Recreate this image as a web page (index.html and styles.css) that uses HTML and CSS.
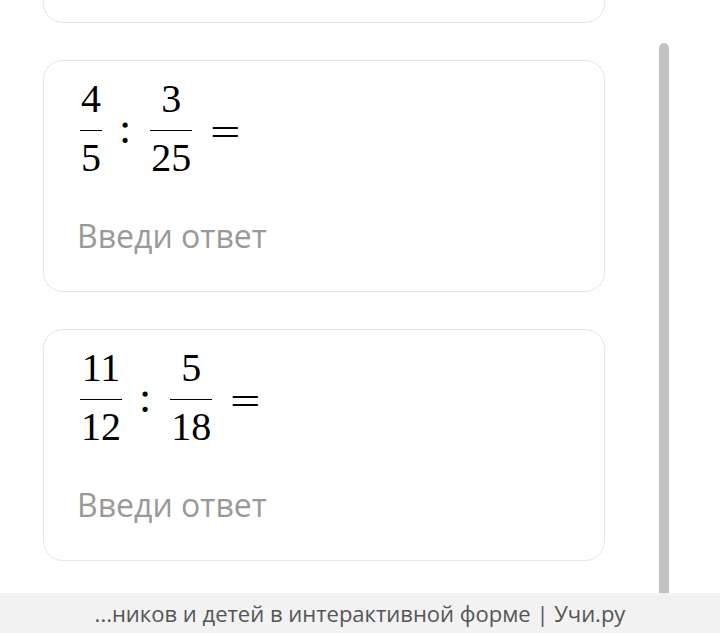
FILE: index.html
```html
<!DOCTYPE html>
<html lang="ru">
<head>
    <meta charset="UTF-8">
    <meta name="viewport" content="width=device-width, initial-scale=1.0">
    <title>Учи.ру</title>
    <link rel="stylesheet" href="styles.css">
</head>
<body>
    <div class="tasks">
        <!-- previous task, scrolled out of view -->
        <div class="task"></div>

        <div class="task">
            <div class="expr">
                <span class="frac"><span class="num">4</span><span class="den">5</span></span>
                <span class="op colon">:</span>
                <span class="frac"><span class="num">3</span><span class="den">25</span></span>
                <span class="op eq">=</span>
            </div>
            <div class="answer">Введи ответ</div>
        </div>

        <div class="task">
            <div class="expr">
                <span class="frac"><span class="num">11</span><span class="den">12</span></span>
                <span class="op colon">:</span>
                <span class="frac"><span class="num">5</span><span class="den">18</span></span>
                <span class="op eq">=</span>
            </div>
            <div class="answer">Введи ответ</div>
        </div>
    </div>

    <div class="scrollbar"></div>

    <div class="footer">...ников и детей в интерактивной форме | Учи.ру</div>
</body>
</html>
```

FILE: styles.css
```css
body {
    margin: 0;
    background-color: #fff;
    font-family: "Open Sans", sans-serif;
    overflow: hidden;
}

.tasks {
    display: flex;
    flex-direction: column;
    gap: 37px;
    width: 562px;
    margin-top: -209px;
    margin-left: 43px;
}

.task {
    box-sizing: border-box;
    height: 232px;
    padding: 18px 36px 0 33px;
    border: 1.5px solid #e6e6e6;
    border-radius: 20px;
}

/* math expression */
.expr {
    display: flex;
    align-items: center;
    margin-left: 3px;
    font-family: "Liberation Serif", serif;
    font-size: 40px;
    color: #000;
}

.frac {
    display: inline-flex;
    flex-direction: column;
    text-align: center;
}

.num {
    display: block;
    line-height: 40px;
    padding: 0 1px 11px 1px;
    border-bottom: 1.5px solid #000;
}

.den {
    display: block;
    line-height: 40px;
    padding: 0 1px;
    margin-top: 7px;
}

.op {
    line-height: 40px;
}

.colon {
    margin: 0 19px 0 17px;
    font-size: 44px;
}

.eq {
    margin-left: 22px;
    transform: translateY(4px) scaleX(1.35);
}

.answer {
    margin-top: 38px;
    font-size: 32px;
    line-height: 40px;
    color: #999;
}

/* overlay scrollbar */
.scrollbar {
    position: fixed;
    left: 659px;
    top: 43px;
    width: 10px;
    height: 560px;
    background-color: #c2c2c2;
    border-radius: 5px 5px 0 0;
}

.footer {
    position: fixed;
    left: 0;
    right: 0;
    bottom: 0;
    height: 40px;
    line-height: 40px;
    background-color: #f2f2f2;
    color: #555;
    font-size: 22px;
    text-align: center;
}
```
